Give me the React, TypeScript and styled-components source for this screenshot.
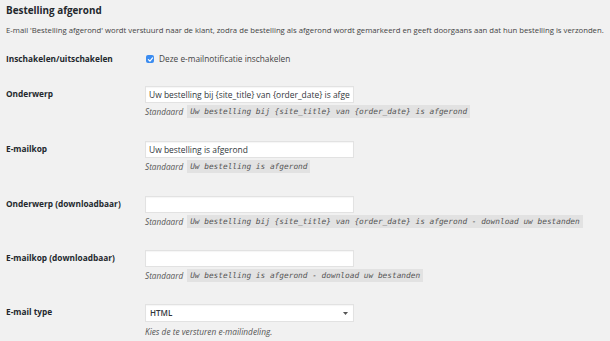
import React from "react";
import styled, { createGlobalStyle } from "styled-components";

const Global = createGlobalStyle`
  html, body { margin: 0; padding: 0; background: #f1f1f1; }
  body { font-family: "Open Sans", "Liberation Sans", sans-serif; color: #23282d; }
`;

const Page = styled.div`
  padding: 0 6px;
  width: 610px;
  height: 341px;
  box-sizing: border-box;
  overflow: hidden;
`;

const Title = styled.h2`
  margin: 2px 0 0;
  font-size: 9.9px;
  line-height: 16px;
  font-weight: 700;
  color: #23282d;
`;

const Intro = styled.p`
  margin: 5px 0 0;
  font-size: 7.72px;
  line-height: 14px;
  color: #444;
  white-space: nowrap;
`;

const Form = styled.div`
  display: grid;
  grid-template-columns: 139px 1fr;
  margin-top: 4px;
`;

const Label = styled.div<{ $pt: number }>`
  padding-top: ${(p) => p.$pt}px;
  font-size: 8.3px;
  font-weight: 700;
  line-height: 12px;
  color: #23282d;
  white-space: nowrap;
`;

const Field = styled.div<{ $pt: number; $pb: number }>`
  padding-top: ${(p) => p.$pt}px;
  padding-bottom: ${(p) => p.$pb}px;
  display: flex;
  flex-direction: column;
  align-items: flex-start;
`;

const CheckLabel = styled.label`
  display: flex;
  align-items: center;
  gap: 5px;
  font-size: 8.3px;
  line-height: 12px;
  color: #444;
`;

const Box = styled.span`
  width: 8px;
  height: 8px;
  border-radius: 2px;
  background: #3b8cf0;
  display: inline-flex;
  align-items: center;
  justify-content: center;
  margin-left: 1px;
`;

const Input = styled.input`
  width: 209px;
  height: 17px;
  margin: 0;
  box-sizing: border-box;
  background: #fff;
  border: 1px solid #e2e2e2;
  border-radius: 0;
  outline: none;
  box-shadow: inset 0 1px 1px rgba(0, 0, 0, 0.04);
  font-family: "Open Sans", "Liberation Sans", sans-serif;
  font-size: 8.45px;
  line-height: 15px;
  padding: 0 3px;
  color: #32373c;
`;

const Select = styled.div`
  width: 209px;
  height: 18px;
  box-sizing: border-box;
  background: #fff;
  border: 1px solid #e2e2e2;
  box-shadow: inset 0 1px 1px rgba(0, 0, 0, 0.04);
  display: flex;
  justify-content: space-between;
  align-items: center;
  padding: 0 5px 0 4px;
  font-weight: 600;
  font-size: 8px;
  line-height: 16px;
  color: #32373c;
`;

const Hint = styled.div`
  margin-top: 2px;
  display: flex;
  align-items: center;
  gap: 4px;
  font-size: 8.2px;
  line-height: 13px;
  font-style: italic;
  color: #555;
  white-space: nowrap;
`;

const Code = styled.code`
  background: #e2e2e2;
  font-family: "DejaVu Sans Mono", "Liberation Mono", monospace;
  font-style: italic;
  font-size: 7.8px;
  line-height: 13px;
  padding: 0 3px;
  color: #555;
`;

const Note = styled.div`
  margin-top: 4px;
  font-size: 8.3px;
  line-height: 12px;
  font-style: italic;
  color: #555;
`;

const rows = [
  {
    label: "Onderwerp",
    value: "Uw bestelling bij {site_title} van {order_date} is afgerond",
    def: "Uw bestelling bij {site_title} van {order_date} is afgerond",
    pb: 9,
  },
  { label: "E-mailkop", value: "Uw bestelling is afgerond", def: "Uw bestelling is afgerond", pb: 9 },
  {
    label: "Onderwerp (downloadbaar)",
    value: "",
    def: "Uw bestelling bij {site_title} van {order_date} is afgerond - download uw bestanden",
    pb: 8,
  },
  {
    label: "E-mailkop (downloadbaar)",
    value: "",
    def: "Uw bestelling is afgerond - download uw bestanden",
    pb: 8,
  },
];

export default function App() {
  return (
    <Page>
      <Global />
      <Title>Bestelling afgerond</Title>
      <Intro>
        E-mail 'Bestelling afgerond' wordt verstuurd naar de klant, zodra de bestelling als afgerond wordt
        gemarkeerd en geeft doorgaans aan dat hun bestelling is verzonden.
      </Intro>
      <Form>
        <Label $pt={12}>Inschakelen/uitschakelen</Label>
        <Field $pt={12} $pb={7}>
          <CheckLabel>
            <Box>
              <svg width="7" height="7" viewBox="0 0 10 10">
                <path d="M2 5.2 L4.2 7.3 L8 2.8" fill="none" stroke="#fff" strokeWidth="1.8" strokeLinecap="round" strokeLinejoin="round" />
              </svg>
            </Box>
            Deze e-mailnotificatie inschakelen
          </CheckLabel>
        </Field>
        {rows.map((r) => (
          <React.Fragment key={r.label}>
            <Label $pt={16}>{r.label}</Label>
            <Field $pt={14} $pb={r.pb}>
              <Input type="text" readOnly value={r.value} />
              <Hint>
                Standaard <Code>{r.def}</Code>
              </Hint>
            </Field>
          </React.Fragment>
        ))}
        <Label $pt={16}>E-mail type</Label>
        <Field $pt={14} $pb={0}>
          <Select>
            <span>HTML</span>
            <svg width="5" height="3" viewBox="0 0 5 3">
              <path d="M0 0 L5 0 L2.5 3 Z" fill="#555" />
            </svg>
          </Select>
          <Note>Kies de te versturen e-mailindeling.</Note>
        </Field>
      </Form>
    </Page>
  );
}
